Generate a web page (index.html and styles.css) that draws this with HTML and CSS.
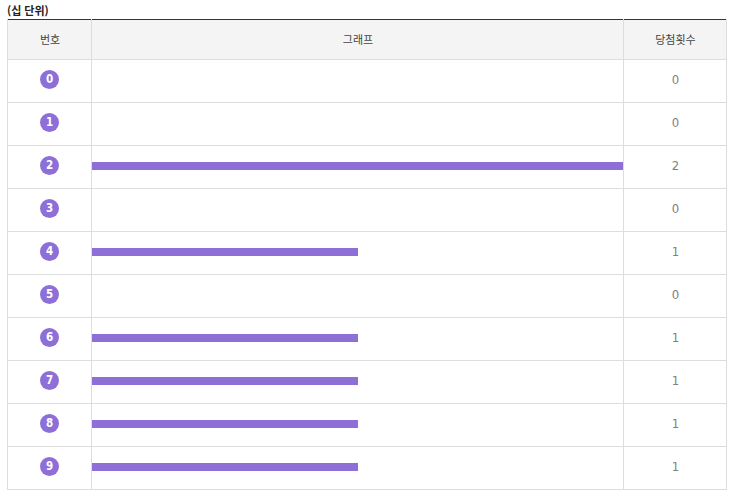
FILE: index.html
```html
<!DOCTYPE html>
<html lang="ko">
<head>
<meta charset="utf-8">
<title>십 단위</title>
<link rel="stylesheet" href="styles.css">
</head>
<body>
<p class="caption">(십 단위)</p>
<table class="stats">
<thead>
<tr><th class="col-num">번호</th><th>그래프</th><th class="col-count">당첨횟수</th></tr>
</thead>
<tbody>
<tr><td><span class="ball">0</span></td><td class="graph"></td><td class="count">0</td></tr>
<tr><td><span class="ball">1</span></td><td class="graph"></td><td class="count">0</td></tr>
<tr><td><span class="ball">2</span></td><td class="graph"><div class="bar" style="width:100%"></div></td><td class="count">2</td></tr>
<tr><td><span class="ball">3</span></td><td class="graph"></td><td class="count">0</td></tr>
<tr><td><span class="ball">4</span></td><td class="graph"><div class="bar" style="width:50%"></div></td><td class="count">1</td></tr>
<tr><td><span class="ball">5</span></td><td class="graph"></td><td class="count">0</td></tr>
<tr><td><span class="ball">6</span></td><td class="graph"><div class="bar" style="width:50%"></div></td><td class="count">1</td></tr>
<tr><td><span class="ball">7</span></td><td class="graph"><div class="bar" style="width:50%"></div></td><td class="count">1</td></tr>
<tr><td><span class="ball">8</span></td><td class="graph"><div class="bar" style="width:50%"></div></td><td class="count">1</td></tr>
<tr><td><span class="ball">9</span></td><td class="graph"><div class="bar" style="width:50%"></div></td><td class="count">1</td></tr>
</tbody>
</table>
</body>
</html>
```
FILE: styles.css
```css
html, body {
  margin: 0;
  padding: 0;
  background: #fff;
}
body {
  padding: 0 6px 0 7px;
  font-family: "Noto Sans CJK KR", "DejaVu Sans", sans-serif;
  font-size: 11px;
  color: #333;
}
.caption {
  margin: 0;
  height: 19px;
  line-height: 20px;
  font-size: 11px;
  font-weight: 700;
  color: #222;
}
.stats {
  width: 720px;
  table-layout: fixed;
  border-collapse: collapse;
  border-top: 1px solid #333;
}
.stats th, .stats td {
  padding: 0 0 2px;
  border: 1px solid #ddd;
  text-align: center;
  vertical-align: middle;
  height: 40px;
}
.stats thead tr:first-child th {
  border-top: 0;
}
.stats th {
  height: 37px;
  padding-left: 1px;
  background: #f4f4f4;
  font-weight: 400;
  color: #444;
}
.col-num { width: 82px; }
.col-count { width: 101px; }
.ball {
  display: block;
  width: 19px;
  height: 19px;
  margin: 0 auto 1px;
  border-radius: 50%;
  background: #8d6fd7;
  color: #fff;
  font-family: "DejaVu Sans Condensed", "DejaVu Sans", sans-serif;
  font-size: 11.5px;
  font-weight: 700;
  line-height: 19px;
}
.stats td.graph {
  text-align: left;
}
.bar {
  height: 8px;
  background: #8d6fd7;
}
.stats td.count {
  height: 39px;
  padding: 0 0 3px 1px;
  font-family: "DejaVu Sans Condensed", "DejaVu Sans", sans-serif;
  font-size: 13px;
  color: #808080;
}
```
